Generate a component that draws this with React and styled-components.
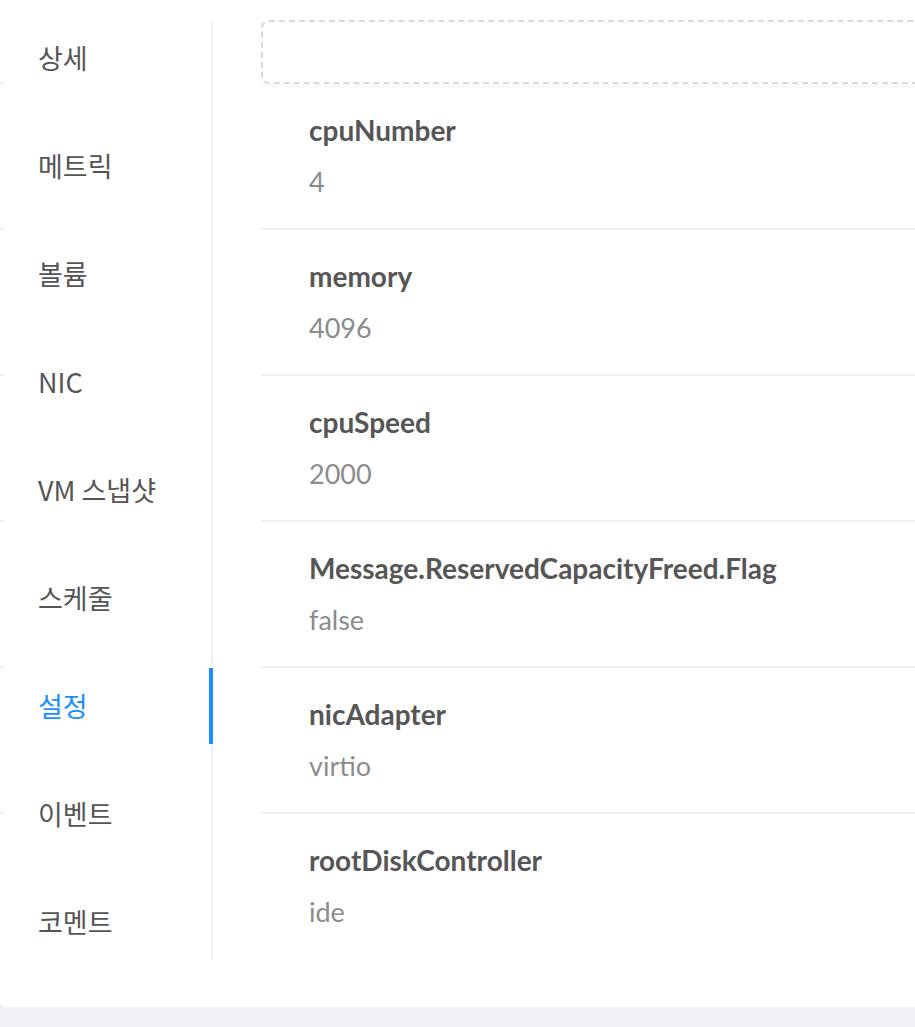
import React from "react";
import styled, { createGlobalStyle } from "styled-components";

const Global = createGlobalStyle`
  html, body { margin: 0; padding: 0; background: #f0f2f5; overflow: hidden; }
  body { font-family: Lato, "Noto Sans CJK KR", sans-serif; }
  * { box-sizing: border-box; }
`;

const Card = styled.div`
  background: #fff;
  border-radius: 0 0 6px 6px;
  box-shadow: 0 1px 0 #e4e6ea;
  padding: 20px 0 47px 0;
  width: 1100px;
  display: flex;
  align-items: flex-start;
`;

const MarkStrip = styled.div`
  width: 4px;
  flex: none;
  display: flex;
  flex-direction: column;
  gap: 144px;
  padding-top: 62px;
`;

const Mark = styled.div`
  height: 2px;
  background: #f0f0f0;
`;

const Nav = styled.div`
  width: 209px;
  flex: none;
  border-right: 2px solid #f0f0f0;
  display: flex;
  flex-direction: column;
  gap: 32px;
`;

const Tab = styled.div`
  position: relative;
  padding: 16px 0 16px 34px;
  font-family: "Noto Sans CJK KR", Lato, sans-serif;
  font-size: 27px;
  line-height: 44px;
  color: ${(p) => (p.$active ? "#1890ff" : "#555555")};
`;

const Ink = styled.span`
  position: absolute;
  right: -2px;
  top: 0;
  bottom: 0;
  width: 4px;
  background: #1890ff;
`;

const Content = styled.div`
  flex: 1;
  padding-left: 48px;
`;

const DashedBox = styled.div`
  height: 64px;
  border: 2px dashed #d9d9d9;
  border-radius: 8px;
  background: #fff;
  box-shadow: 0 4px 0 rgba(0, 0, 0, 0.02);
`;

const Item = styled.div`
  padding: 24px 0 24px 48px;
  border-bottom: ${(p) => (p.$last ? "none" : "2px solid #f0f0f0")};
`;

const Title = styled.div`
  font-size: 28px;
  line-height: 44px;
  font-weight: 700;
  color: #565656;
  margin-bottom: 8px;
`;

const Value = styled.div`
  font-size: 27px;
  line-height: 44px;
  color: #8c8c8c;
`;

const tabs = ["상세", "메트릭", "볼륨", "NIC", "VM 스냅샷", "스케줄", "설정", "이벤트", "코멘트"];
const items = [
  ["cpuNumber", "4"],
  ["memory", "4096"],
  ["cpuSpeed", "2000"],
  ["Message.ReservedCapacityFreed.Flag", "false"],
  ["nicAdapter", "virtio"],
  ["rootDiskController", "ide"],
];

export default function App() {
  return (
    <>
      <Global />
      <Card>
        <MarkStrip>
          {Array.from({ length: 6 }).map((_, i) => (
            <Mark key={i} />
          ))}
        </MarkStrip>
        <Nav>
          {tabs.map((t) => (
            <Tab key={t} $active={t === "설정"}>
              {t}
              {t === "설정" && <Ink />}
            </Tab>
          ))}
        </Nav>
        <Content>
          <DashedBox />
          {items.map(([k, v], i) => (
            <Item key={k} $last={i === items.length - 1}>
              <Title>{k}</Title>
              <Value>{v}</Value>
            </Item>
          ))}
        </Content>
      </Card>
    </>
  );
}
